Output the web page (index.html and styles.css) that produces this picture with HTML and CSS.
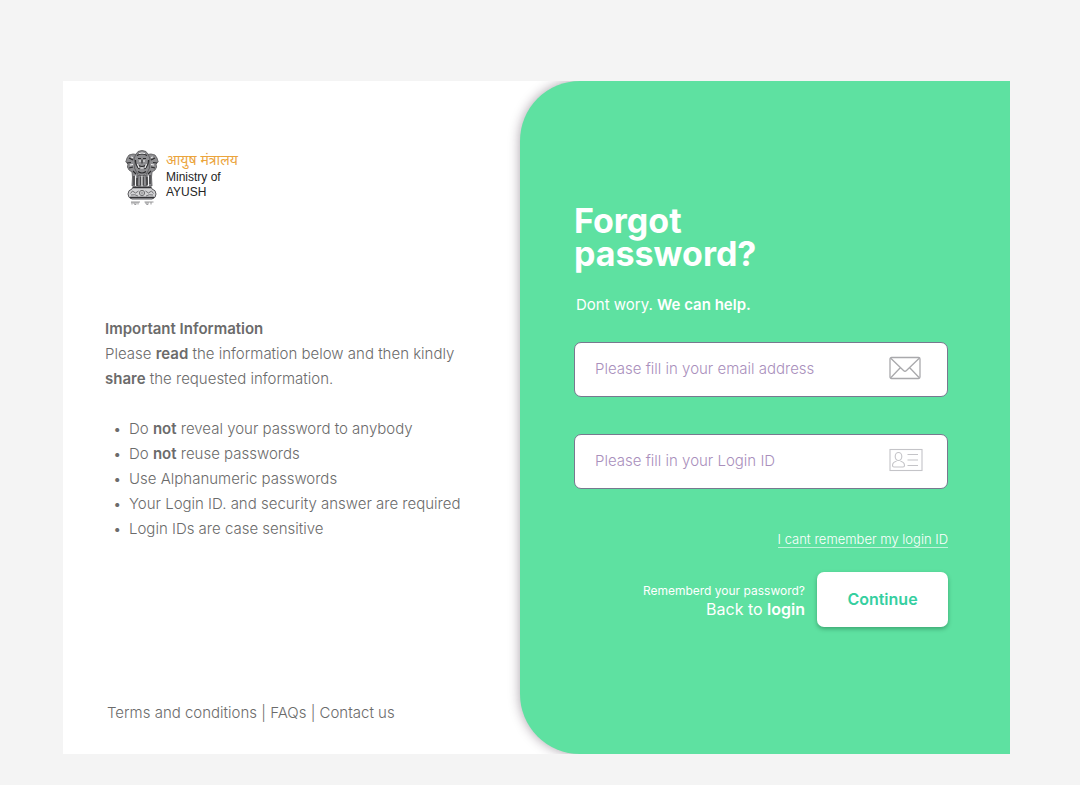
FILE: index.html
```html
<!DOCTYPE html>
<html lang="en">
<head>
<meta charset="utf-8">
<meta name="viewport" content="width=device-width, initial-scale=1">
<title>Forgot password</title>
<link rel="stylesheet" href="styles.css">
</head>
<body>
<main class="card">
  <section class="info">
    <div class="brand">
      <svg class="emblem" viewBox="0 0 34 56" aria-hidden="true">
        <g fill="#8e8e91" stroke="#555558" stroke-width=".8">
          <path d="M12 4.500 8 4 4 5 2 8 .8 12l2.200 2-.6 3 1.600 3 3 2 .5 5L7 36h4l2-10z"/>
          <path d="m22 4.500 4-.5 4 1 2 3 1.200 4-2.200 2 .6 3-1.600 3-3 2-.5 5L27 36h-4l-2-10z"/>
          <path d="M10.500 5 13 1.500q4-2 8 0L23.500 5l1.500 4-1 4 .5 5-2.500 5-5 3.500-5-3.500L9.500 18l.5-5-1-4z"/>
          <path d="M13 25.500h3V36h-3.500zM18 25.500h3l.5 10.500H18z"/>
        </g>
        <g fill="none" stroke="#29292b" stroke-width="1.100">
          <path d="M12 5.500q5-3 10 0M10.500 10q0 6 4 9m9-9q0 6-4 9M13 8.500h3m2 0h3M17 9.500v4m-3 2q3 2 6 0M13 21.500q4 3 8 0M4 8l4 2M2 13l4-.5M4 18l4-1M30 8l-4 2m6 3-4-.5m2 5.500-4-1M8 21l3 3m15-3-3 3M9 26v9m3-7v8m4-9v8m2-8v8m4-8v8m3-10v9"/>
        </g>
        <g fill="none" stroke="#f4f4f5" stroke-width="1">
          <path d="M14 3.500q3-1 6 0M14 11h2m2 0h2M12.500 14l1.500 4m7.500-4L20 18M15.500 18h3M6 7l2 .5M5 15l3-.5M28 7l-2 .5m3 7.500-3-.5M10.500 25.500V36m13-10.500V36M16.900 26v9"/>
        </g>
        <path d="M8 37h18l1 2q4 1 4 5t-4 5H7q-4-1-4-5t4-5z" fill="#d2d2d4" stroke="#59595c"/>
        <path d="M8 37.500h18M5 47.500h24" stroke="#333336" stroke-width="1.600" fill="none"/>
        <path d="m5.500 43.500 2-2.500 3 2 3-2m7 0 3 2 3-2 2 2.500M6 45q4-1 7 1m8 0q3-2 7-1" fill="none" stroke="#69696c" stroke-width=".9"/>
        <circle cx="17" cy="43" r="2.600" fill="#eeeeef" stroke="#4c4c4f" stroke-width=".8"/>
        <path d="M17 40.500v5M14.500 43h5" stroke="#77777a" stroke-width=".7"/>
        <path d="M6 52h9m4.500 0h9M7 52v2.500m2-2.500v2l2 .5V52m2 0v2.500m8-2.500v2l2 .5V52m3 0v2.500" fill="none" stroke="#8a8a8d" stroke-width=".9"/>
      </svg>
      <div class="brand-name">
        <span class="brand-hindi" lang="hi">आयुष मंत्रालय</span>
        <span>Ministry of<br>AYUSH</span>
      </div>
    </div>

    <div class="notes">
      <h2>Important Information</h2>
      <p>Please <b>read</b> the information below and then kindly <b>share</b> the requested information.</p>
      <ul>
        <li>Do <b>not</b> reveal your password to anybody</li>
        <li>Do <b>not</b> reuse passwords</li>
        <li>Use Alphanumeric passwords</li>
        <li>Your Login ID. and security answer are required</li>
        <li>Login IDs are case sensitive</li>
      </ul>
    </div>

    <footer class="links">
      <a href="#terms">Terms and conditions</a> | <a href="#faqs">FAQs</a> | <a href="#contact">Contact us</a>
    </footer>
  </section>

  <form class="reset">
    <h1>Forgot<br>password?</h1>
    <p class="lead">Dont wory. <b>We can help.</b></p>
    <label class="field">
      <input type="email" aria-label="Email address" placeholder="Please fill in your email address">
      <svg class="field-icon" viewBox="0 0 34 24" fill="none" stroke="#a9a9ac" stroke-width="1.3" stroke-linejoin="round" aria-hidden="true">
        <rect x="1" y="1.5" width="30" height="21" rx="1.5"/>
        <path d="M1.500 2 14.500 14.500q1.500 1.500 3 0L30.500 2M1.500 22l10-10.500M30.500 22l-10-10.500"/>
      </svg>
    </label>
    <label class="field">
      <input type="text" aria-label="Login ID" placeholder="Please fill in your Login ID">
      <svg class="field-icon" viewBox="0 0 34 24" fill="none" stroke="#c4c4c8" stroke-width="1.1" aria-hidden="true">
        <rect x="1" y="1.500" width="32" height="21"/>
        <ellipse cx="9.500" cy="8.500" rx="3.300" ry="4"/>
        <path d="M7.500 13.200Q3.500 14 3.500 17.500q0 1.500 1.500 1.500h9q1.500 0 1.500-1.500 0-3.500-4-4.300M18.500 6.500H29M18.500 12H29M18.500 17.500H29"/>
      </svg>
    </label>
    <a class="forgot-id" href="#login-id">I cant remember my login ID</a>
    <div class="actions">
      <p class="back"><span>Rememberd your password?</span><a href="#login">Back to <b>login</b></a></p>
      <button type="submit">Continue</button>
    </div>
  </form>
</main>
</body>
</html>
```
FILE: styles.css
```css
* { box-sizing: border-box; }

body {
  margin: 0;
  min-height: 100vh;
  display: flex;
  padding: 81px 70px 31px 63px;
  background: #f4f4f4;
  color: #6b6b6b;
  font-family: Inter, "Liberation Sans", sans-serif;
  font-size: 15px;
  font-weight: 300;
  line-height: 25px;
}

h1, h2, p, ul { margin: 0; }
a { color: inherit; text-decoration: none; }
b { font-weight: 600; }

.card {
  flex: 1;
  display: grid;
  grid-template-columns: 457fr 490fr;
  background: #fff;
  overflow: hidden;
}

.info {
  display: flex;
  flex-direction: column;
  padding: 69px 42px 29px;
}

.brand {
  display: flex;
  gap: 7px;
  padding-left: 20px;
}

.emblem { width: 34px; height: 56px; }

.brand-name {
  display: flex;
  flex-direction: column;
  color: #242424;
  font-family: "Liberation Sans", "Noto Sans", sans-serif;
  font-size: 12px;
  font-weight: 400;
  line-height: 15px;
}

.brand-hindi {
  color: #eba43c;
  font-size: 14px;
  line-height: 20px;
}

.notes { margin-top: 110px; }

.notes h2 {
  font-size: 15px;
  font-weight: 600;
}

.notes ul {
  margin-top: 25px;
  padding-left: 8px;
  list-style: none;
}

.notes li {
  display: flex;
  white-space: pre-wrap;
}

.notes li::before {
  content: "•";
  flex: none;
  width: 16px;
}

.links {
  margin-top: auto;
  padding-left: 2px;
}

.reset {
  display: flex;
  flex-direction: column;
  padding: 123px 62px 64px 54px;
  background: #5ee1a1;
  border-radius: 60px 0 0 60px;
  box-shadow: 0 0 12px rgba(40, 20, 40, 0.4);
  color: #fff;
}

.reset h1 {
  font-size: 34px;
  font-weight: 700;
  line-height: 33px;
}

.lead {
  margin: 22px 0 25px;
  padding-left: 2px;
  font-weight: 400;
}

.field {
  display: flex;
  align-items: center;
  height: 55px;
  margin-bottom: 37px;
  padding: 0 24px 3px 20px;
  background: #fff;
  border: 1px solid #78788f;
  border-radius: 7px;
}

.field input {
  flex: 1;
  min-width: 0;
  padding: 0;
  border: 0;
  outline: 0;
  background: none;
  color: #6b6b6b;
  font: inherit;
}

.field input::placeholder { color: #a98fbc; opacity: 1; }
.field-icon { width: 34px; height: 24px; }

.forgot-id {
  align-self: flex-end;
  margin-top: 6px;
  border-bottom: 1px solid rgba(255, 255, 255, 0.6);
  font-size: 13px;
  line-height: 15px;
}

.actions {
  display: flex;
  justify-content: flex-end;
  align-items: center;
  gap: 12px;
  margin-top: 24px;
}

.back {
  display: flex;
  flex-direction: column;
  align-items: flex-end;
  font-size: 16px;
  font-weight: 400;
  line-height: 18px;
}

.back span { font-size: 12px; }

.actions button {
  width: 131px;
  height: 55px;
  border: 0;
  border-radius: 7px;
  background: #fff;
  box-shadow: 0 2px 4px rgba(0, 60, 30, 0.35);
  color: #35cfa0;
  font: inherit;
  font-size: 16px;
  font-weight: 600;
}
```
